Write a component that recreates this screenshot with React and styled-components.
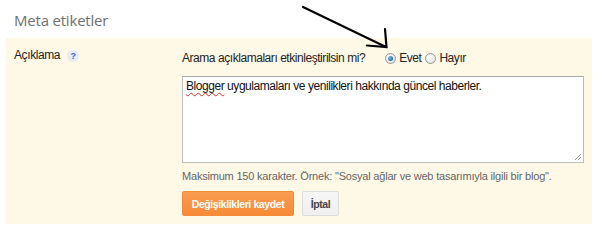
import React from 'react'
import styled, { createGlobalStyle } from 'styled-components'

const GlobalStyle = createGlobalStyle`
  html, body {
    margin: 0;
    padding: 0;
    background: #ffffff;
  }
  body {
    font-family: 'Liberation Sans', Arial, sans-serif;
    color: #222;
  }
`

const Page = styled.div`
  position: relative;
  width: 597px;
  height: 228px;
  overflow: hidden;
`

const Title = styled.h2`
  margin: 0;
  padding: 8px 0 6px 14px;
  height: 24px;
  line-height: 24px;
  font-family: 'Open Sans', sans-serif;
  font-weight: 400;
  font-size: 15px;
  letter-spacing: -0.2px;
  color: #707070;
`

const Panel = styled.div`
  margin: 0 5px 0 6px;
  height: 186px;
  box-sizing: border-box;
  background: #fef8e7;
  padding: 9px 0 0 8px;
  display: grid;
  grid-template-columns: 168px 402px;
`

const Label = styled.div`
  display: flex;
  align-items: center;
  gap: 7px;
  font-size: 12px;
  letter-spacing: -0.4px;
  line-height: 16px;
  height: 16px;
  color: #222;
`

const Help = styled.span`
  display: inline-flex;
  align-items: center;
  justify-content: center;
  width: 12px;
  height: 12px;
  border-radius: 50%;
  background: #e6ebf4;
  color: #4169c4;
  font-size: 9px;
  letter-spacing: 0;
  font-weight: bold;
  margin-top: 2px;
`

const Content = styled.div`
  display: flex;
  flex-direction: column;
  padding-top: 3px;
`

const Question = styled.div`
  display: flex;
  align-items: center;
  font-size: 12px;
  letter-spacing: -0.45px;
  line-height: 16px;
  height: 16px;
`

const Choices = styled.div`
  display: flex;
  align-items: center;
  margin-left: 20px;
`

const Radio = styled.span`
  box-sizing: border-box;
  width: 11px;
  height: 11px;
  border-radius: 50%;
  border: 1px solid #9a9a9a;
  background: radial-gradient(circle at 40% 35%, #ffffff 0%, #e2e2e2 80%);
  display: inline-flex;
  align-items: center;
  justify-content: center;
  margin: 0 3px 0 0;

  &::after {
    content: '';
    display: ${p => (p.$checked ? 'block' : 'none')};
    width: 5px;
    height: 5px;
    border-radius: 50%;
    background: radial-gradient(circle at 35% 35%, #74bcf0 0%, #1c5e9c 85%);
  }
`

const ChoiceText = styled.span`
  margin-right: 4px;
`

const TextBox = styled.div`
  position: relative;
  box-sizing: border-box;
  margin-top: 10px;
  width: 402px;
  height: 87px;
  border: 1px solid #bdbdbd;
  border-top-color: #a8a8a8;
  background: #fff;
  padding: 1px 3px;
  font-size: 12px;
  letter-spacing: -0.45px;
  line-height: 16px;
  color: #111;
`

const Misspelled = styled.span`
  text-decoration: underline wavy #e0302a;
  text-decoration-thickness: 1px;
  text-underline-offset: 2px;
`

const Grip = styled.svg`
  position: absolute;
  right: 1px;
  bottom: 1px;
`

const Hint = styled.div`
  margin-top: 6px;
  font-size: 11px;
  letter-spacing: -0.2px;
  line-height: 15px;
  white-space: nowrap;
  color: #666;
`

const Buttons = styled.div`
  display: flex;
  gap: 8px;
  margin-top: 7px;
`

const Button = styled.button`
  box-sizing: border-box;
  height: 25px;
  padding: 0;
  border-radius: 2px;
  font-family: 'Liberation Sans', Arial, sans-serif;
  font-size: 10.5px;
  letter-spacing: -0.4px;
  font-weight: bold;
  white-space: nowrap;
  border: 1px solid ${p => (p.$primary ? '#f48b3a' : '#dcdcdc')};
  background: ${p =>
    p.$primary
      ? 'linear-gradient(#fa9c50, #f68a37)'
      : 'linear-gradient(#f6f6f6, #f0f0f0)'};
  color: ${p => (p.$primary ? '#fff' : '#444')};
  width: ${p => p.$width}px;
`

const Arrow = styled.svg`
  position: absolute;
  left: 0;
  top: 0;
  pointer-events: none;
`

export default function App() {
  return (
    <Page>
      <GlobalStyle />
      <Title>Meta etiketler</Title>
      <Panel>
        <Label>
          Açıklama
          <Help>?</Help>
        </Label>
        <Content>
          <Question>
            Arama açıklamaları etkinleştirilsin mi?
            <Choices>
              <Radio $checked />
              <ChoiceText>Evet</ChoiceText>
              <Radio />
              <ChoiceText>Hayır</ChoiceText>
            </Choices>
          </Question>
          <TextBox>
            <Misspelled>Blogger</Misspelled> uygulamaları ve yenilikleri hakkında güncel haberler.
            <Grip width="9" height="9" viewBox="0 0 9 9">
              <path d="M8 2 L2 8 M8 5 L5 8" stroke="#9a9a9a" strokeWidth="1" />
            </Grip>
          </TextBox>
          <Hint>Maksimum 150 karakter. Örnek: "Sosyal ağlar ve web tasarımıyla ilgili bir blog".</Hint>
          <Buttons>
            <Button $primary $width={112}>Değişiklikleri kaydet</Button>
            <Button $width={37}>İptal</Button>
          </Buttons>
        </Content>
      </Panel>
      <Arrow width="597" height="228" viewBox="0 0 597 228">
        <g stroke="#000" strokeWidth="2.2" strokeLinecap="round" fill="none">
          <path d="M303 7 L386 47" />
          <path d="M385 29 L386.5 47 L367 45.5" />
        </g>
      </Arrow>
    </Page>
  )
}
